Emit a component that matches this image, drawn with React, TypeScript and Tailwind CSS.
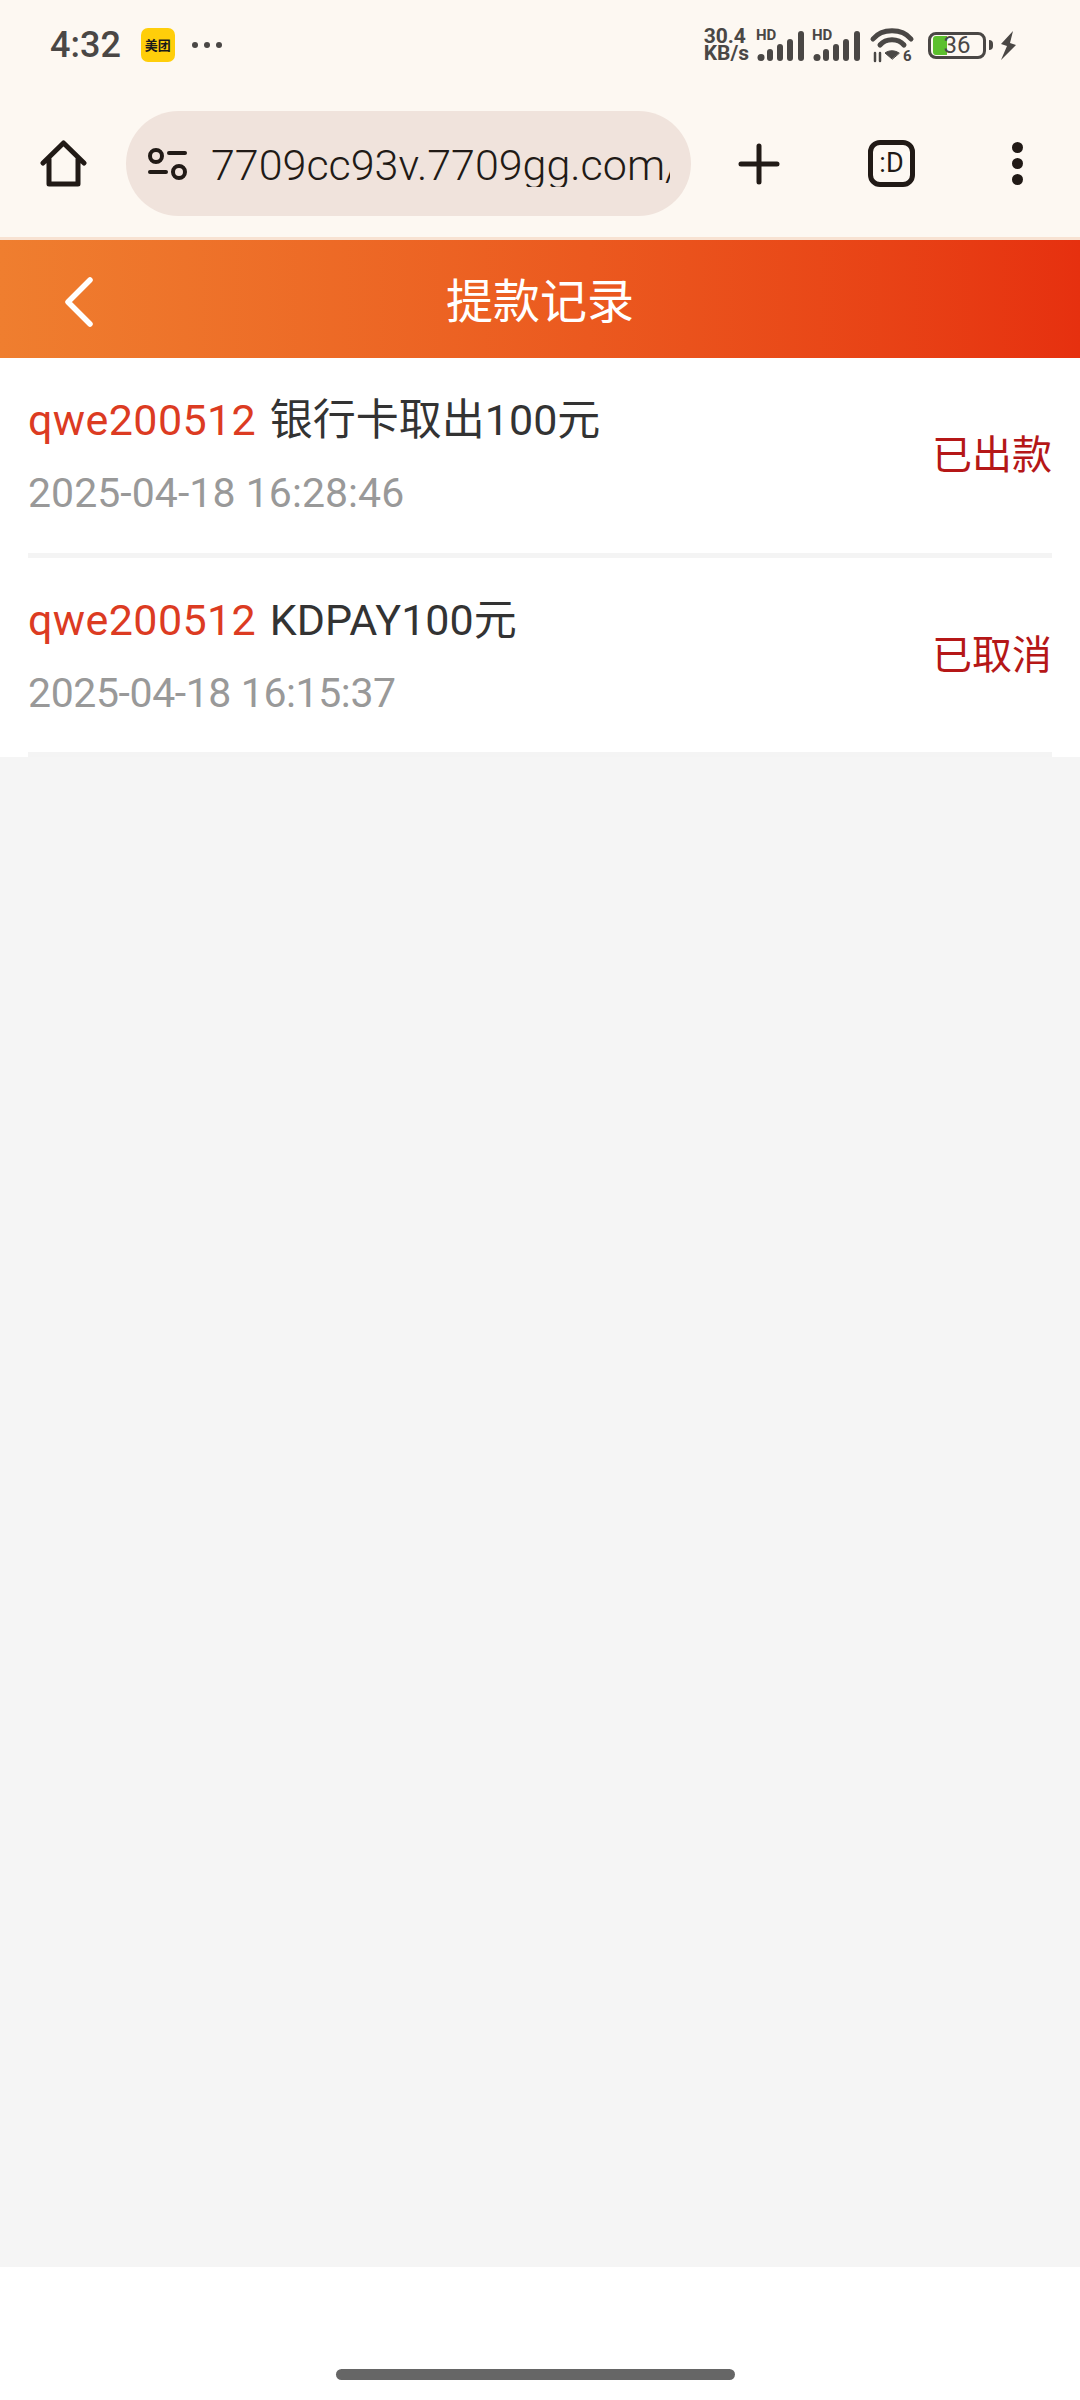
const sans = "font-['Roboto','Noto_Sans_CJK_SC',sans-serif]";

const records = [
  { user: "qwe200512", title: "银行卡取出100元", time: "2025-04-18 16:28:46", timeClass: "tracking-[0.05px]", status: "已出款" },
  { user: "qwe200512", title: "KDPAY100元", time: "2025-04-18 16:15:37", timeClass: "tracking-[-0.4px]", status: "已取消" },
];

function Signal() {
  return (
    <svg className="overflow-visible" width="48" height="34" viewBox="0 0 48 34" fill="#4a4745">
      <text x="0" y="12" fontFamily="Roboto" fontWeight="700" fontSize="15">HD</text>
      <circle cx="5" cy="29.5" r="3.5" />
      <rect x="11" y="21" width="6" height="12" rx="3" />
      <rect x="21" y="16" width="6" height="17" rx="3" />
      <rect x="31" y="11" width="6" height="22" rx="3" />
      <rect x="42" y="3" width="6" height="30" rx="3" />
    </svg>
  );
}

function Wifi() {
  return (
    <svg className="overflow-visible" width="44" height="34" viewBox="0 0 44 34" fill="none" stroke="#4a4745" strokeLinecap="round">
      <path d="M3 11 C12 0 32 0 41 11" strokeWidth="5" />
      <path d="M10 17 C16 10 28 10 34 17" strokeWidth="5" />
      <path d="M22 31 L15 25 C19 22 25 22 29 25 Z" fill="#4a4745" strokeWidth="1" />
      <path d="M5 25 V33 M10 25 V33" strokeWidth="2.5" />
      <text x="33" y="33" fontFamily="Roboto" fontWeight="700" fontSize="15" fill="#4a4745" stroke="none">6</text>
    </svg>
  );
}

function StatusBar() {
  return (
    <div className="flex h-[90px] items-center justify-between pl-[50px] pr-[63px] text-[#4a4745]">
      <div className="flex items-center">
        <span className="text-[36px] font-medium leading-none">4:32</span>
        <span className="ml-[20px] flex h-[34px] w-[34px] items-center justify-center rounded-[7px] bg-[#ffce0a] text-[13px] font-bold leading-none text-[#1a1a1a]">
          美团
        </span>
        <span className="ml-[17px] flex gap-[6px]">
          <i className="h-[6px] w-[6px] rounded-full bg-[#4a4745]" />
          <i className="h-[6px] w-[6px] rounded-full bg-[#4a4745]" />
          <i className="h-[6px] w-[6px] rounded-full bg-[#4a4745]" />
        </span>
      </div>
      <div className="flex items-center">
        <div className="mr-[7px] flex flex-col text-[21px] font-bold leading-[17px]">
          <span>30.4</span>
          <span>KB/s</span>
        </div>
        <Signal />
        <div className="w-[8px]" />
        <Signal />
        <div className="w-[10px]" />
        <Wifi />
        <div className="w-[14px]" />
        <div className="relative flex h-[27px] w-[58px] items-center justify-center rounded-[8px] border-[3px] border-[#4a4745] text-[24px] leading-none">
          <span className="absolute bottom-[1px] left-[2px] top-[1px] w-[14px] rounded-l-[3px] bg-[#5cc02e]" />
          <span className="relative">36</span>
        </div>
        <div className="ml-[3px] h-[10px] w-[4px] rounded-r-sm bg-[#4a4745]" />
        <svg className="ml-[7px]" width="17" height="29" viewBox="0 0 17 29" fill="#4a4745">
          <path d="M13 0 L1 13 L7 15 L1 29 L16 14 L10 12 Z" />
        </svg>
      </div>
    </div>
  );
}

function Toolbar() {
  return (
    <div className="flex h-[150px] items-center border-b-[3px] border-[#f8e2d2] pl-[40px]">
      <svg width="47" height="47" viewBox="0 0 47 47" fill="none" stroke="#211a16" strokeWidth="5" strokeLinejoin="round" strokeLinecap="round">
        <path d="M3 23 L23.5 3 L44 23 M9 19 V44 H38 V19" />
      </svg>
      <div className="ml-[39px] flex h-[105px] w-[565px] items-center overflow-hidden rounded-full bg-[#f0e3dc] pl-[22px] pr-[21px]">
        <svg className="shrink-0" width="39" height="32" viewBox="0 0 39 32" fill="none" stroke="#211a16" strokeWidth="4" strokeLinecap="round">
          <circle cx="8" cy="8" r="6" />
          <path d="M21 5 H37" />
          <path d="M2 24 H18" />
          <circle cx="31" cy="24" r="6" />
        </svg>
        <span className="ml-[24px] overflow-hidden whitespace-nowrap pt-[4px] text-[43px] font-light leading-none text-[#211a16]">
          7709cc93v.7709gg.com/
        </span>
      </div>
      <svg className="ml-[47px]" width="42" height="42" viewBox="0 0 42 42" stroke="#211a16" strokeWidth="5" strokeLinecap="round">
        <path d="M21 3 V39 M3 21 H39" />
      </svg>
      <div className="ml-[88px] flex h-[47px] w-[47px] items-center justify-center rounded-[12px] border-[5px] border-[#211a16] text-[27px] leading-none text-[#211a16]">
        :D
      </div>
      <div className="ml-[97px] flex flex-col gap-[5px]">
        <i className="h-[11px] w-[11px] rounded-full bg-[#211a16]" />
        <i className="h-[11px] w-[11px] rounded-full bg-[#211a16]" />
        <i className="h-[11px] w-[11px] rounded-full bg-[#211a16]" />
      </div>
    </div>
  );
}

function PageHeader() {
  return (
    <div className="flex h-[118px] items-center justify-between bg-gradient-to-r from-[#ef7e2f] to-[#e6300f] px-[65px] pt-[5px]">
      <svg width="28" height="50" viewBox="0 0 28 50" fill="none" stroke="#fff" strokeWidth="5.5" strokeLinecap="round" strokeLinejoin="round">
        <path d="M25 3 L3 25 L25 47" />
      </svg>
      <span className="text-[47px] leading-none text-white">提款记录</span>
      <div className="w-[28px]" />
    </div>
  );
}

export default function App() {
  return (
    <div className={`${sans} flex h-[2400px] w-[1080px] flex-col overflow-hidden bg-white`}>
      <div className="bg-[#fdf8f2]">
        <StatusBar />
        <Toolbar />
      </div>
      <PageHeader />
      <div className="bg-white px-[28px]">
        {records.map((r) => (
          <div key={r.time} className="flex h-[199.5px] items-center justify-between border-b-[5px] border-[#f4f4f4]">
            <div className="pt-[3px]">
              <div className="text-[43px] leading-[50px] text-[#333]">
                <span className="mr-[3px] tracking-[0.4px] text-[#dc3b22]">{r.user}</span> {r.title}
              </div>
              <div className={`mt-[23px] text-[41px] leading-[50px] text-[#999] ${r.timeClass}`}>{r.time}</div>
            </div>
            <div className="pt-[2px] text-[40px] leading-none text-[#b51717]">{r.status}</div>
          </div>
        ))}
      </div>
      <div className="flex-1 bg-[#f5f5f5]" />
      <div className="flex h-[133px] flex-col items-center justify-end bg-white pb-[20px]">
        <div className="mr-[9px] h-[11px] w-[399px] rounded-full bg-[#666]" />
      </div>
    </div>
  );
}
